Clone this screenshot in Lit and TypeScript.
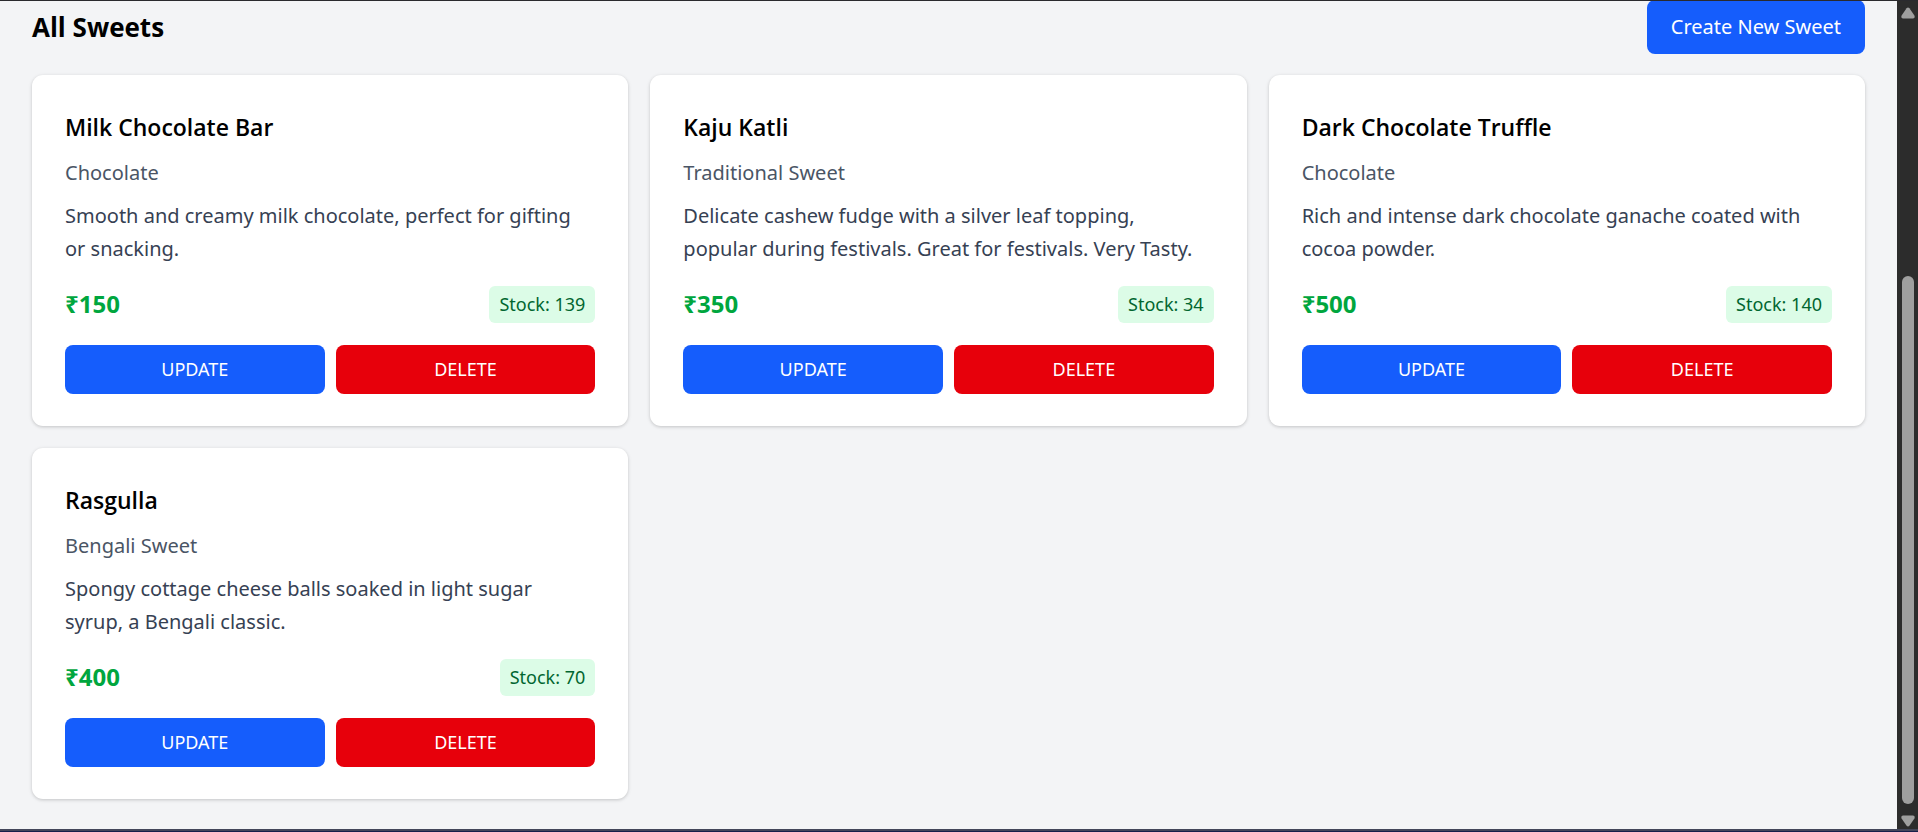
import { LitElement, html, css } from "lit";
import { customElement, property } from "lit/decorators.js";

interface Sweet {
  name: string;
  category: string;
  description: string;
  price: number;
  stock: number;
}

const SWEETS: Sweet[] = [
  {
    name: "Milk Chocolate Bar",
    category: "Chocolate",
    description: "Smooth and creamy milk chocolate, perfect for gifting or snacking.",
    price: 150,
    stock: 139,
  },
  {
    name: "Kaju Katli",
    category: "Traditional Sweet",
    description:
      "Delicate cashew fudge with a silver leaf topping, popular during festivals. Great for festivals. Very Tasty.",
    price: 350,
    stock: 34,
  },
  {
    name: "Dark Chocolate Truffle",
    category: "Chocolate",
    description: "Rich and intense dark chocolate ganache coated with cocoa powder.",
    price: 500,
    stock: 140,
  },
  {
    name: "Rasgulla",
    category: "Bengali Sweet",
    description: "Spongy cottage cheese balls soaked in light sugar syrup, a Bengali classic.",
    price: 400,
    stock: 70,
  },
];

@customElement("sweet-card")
class SweetCard extends LitElement {
  @property({ attribute: false }) sweet!: Sweet;

  static styles = css`
    :host {
      display: block;
      box-sizing: border-box;
      padding: 33px 33px 32px;
      border-radius: 11px;
      background: #fff;
      box-shadow: 0 1px 4px rgba(0, 0, 0, 0.1), 0 1px 3px rgba(0, 0, 0, 0.1);
    }
    .name {
      margin: 0 0 10px;
      font-family: "Open Sans", sans-serif;
      font-size: 23px;
      line-height: 38px;
      font-weight: 600;
      color: #000;
    }
    .category {
      margin: 0 0 10px;
      font-size: 20px;
      line-height: 33px;
      color: #4a5565;
    }
    .description {
      margin: 0;
      padding-right: 11px;
      font-size: 20px;
      line-height: 33px;
      color: #364153;
    }
    .facts {
      display: flex;
      justify-content: space-between;
      align-items: center;
      margin: 20px 0 22px;
    }
    .price {
      font-family: "Open Sans", "Noto Sans", sans-serif;
      font-size: 24px;
      line-height: 38px;
      font-weight: 700;
      color: #00a63e;
    }
    .stock {
      padding: 5px 10px;
      border-radius: 6px;
      background: #dcfce7;
      color: #016630;
      font-size: 18px;
      line-height: 27px;
    }
    .actions {
      display: flex;
      gap: 11px;
    }
    button {
      flex: 1;
      padding: 11px;
      border: 0;
      border-radius: 8px;
      font-family: inherit;
      font-size: 18px;
      line-height: 27px;
      text-transform: uppercase;
      color: #fff;
      cursor: pointer;
    }
    .update {
      background: #155dfc;
    }
    .delete {
      background: #e7000b;
    }
  `;

  render() {
    const s = this.sweet;
    return html`
      <h3 class="name">${s.name}</h3>
      <p class="category">${s.category}</p>
      <p class="description">${s.description}</p>
      <div class="facts">
        <span class="price">₹${s.price}</span>
        <span class="stock">Stock: ${s.stock}</span>
      </div>
      <div class="actions">
        <button class="update" type="button">Update</button>
        <button class="delete" type="button">Delete</button>
      </div>
    `;
  }
}

@customElement("scroll-rail")
class ScrollRail extends LitElement {
  static styles = css`
    :host {
      display: flex;
      flex-direction: column;
      align-items: center;
      box-sizing: border-box;
      width: 21px;
      padding: 6px 0 2px;
      background: #2c2c2c;
    }
    svg {
      display: block;
      width: 14px;
      height: 12px;
      fill: #9f9f9f;
    }
    .before {
      flex: 257;
    }
    .thumb {
      flex: 528;
      width: 12px;
      margin-bottom: 11px;
      border-radius: 6px;
      background: #9f9f9f;
    }
  `;

  render() {
    return html`
      <svg viewBox="0 0 14 12" aria-hidden="true">
        <path d="M5.6 1.2Q7 -.2 8.4 1.2L13.4 8.6Q14.4 11.4 12 11.6H2Q-.4 11.4 .6 8.6Z" />
      </svg>
      <div class="before"></div>
      <div class="thumb"></div>
      <svg viewBox="0 0 14 12" aria-hidden="true">
        <path d="M5.6 10.8Q7 12.2 8.4 10.8L13.4 3.4Q14.4 .6 12 .4H2Q-.4 .6 .6 3.4Z" />
      </svg>
    `;
  }
}

@customElement("app-root")
class AppRoot extends LitElement {
  static styles = css`
    :host {
      display: flex;
      flex-direction: column;
      box-sizing: border-box;
      min-height: 100vh;
      border-top: 1px solid #2a2a2e;
      font-family: "Noto Sans", "Open Sans", sans-serif;
      background: #f3f4f6;
    }
    .view {
      flex: 1;
      display: flex;
      overflow: hidden;
    }
    main {
      flex: 1;
      min-width: 0;
      padding: 0 32px 29px;
    }
    .header {
      display: flex;
      justify-content: space-between;
      align-items: center;
      margin: -1px 0 21px;
    }
    h2 {
      margin: 0;
      font-family: "Open Sans", sans-serif;
      font-size: 26px;
      line-height: 38px;
      font-weight: 700;
      color: #000;
    }
    .create {
      padding: 11px 24px;
      border: 0;
      border-radius: 8px;
      background: #155dfc;
      color: #fff;
      font-family: inherit;
      font-size: 20px;
      line-height: 32px;
      cursor: pointer;
    }
    .grid {
      display: grid;
      grid-template-columns: repeat(3, minmax(0, 1fr));
      gap: 22px;
    }
    .edge {
      height: 1px;
      border-top: 2px solid #43465a;
      background: #16204a;
    }
    @media (max-width: 1100px) {
      .grid {
        grid-template-columns: repeat(auto-fill, minmax(320px, 1fr));
      }
    }
  `;

  render() {
    return html`
      <div class="view">
        <main>
          <div class="header">
            <h2>All Sweets</h2>
            <button class="create" type="button">Create New Sweet</button>
          </div>
          <div class="grid">
            ${SWEETS.map((s) => html`<sweet-card .sweet=${s}></sweet-card>`)}
          </div>
        </main>
        <scroll-rail></scroll-rail>
      </div>
      <div class="edge"></div>
    `;
  }
}
